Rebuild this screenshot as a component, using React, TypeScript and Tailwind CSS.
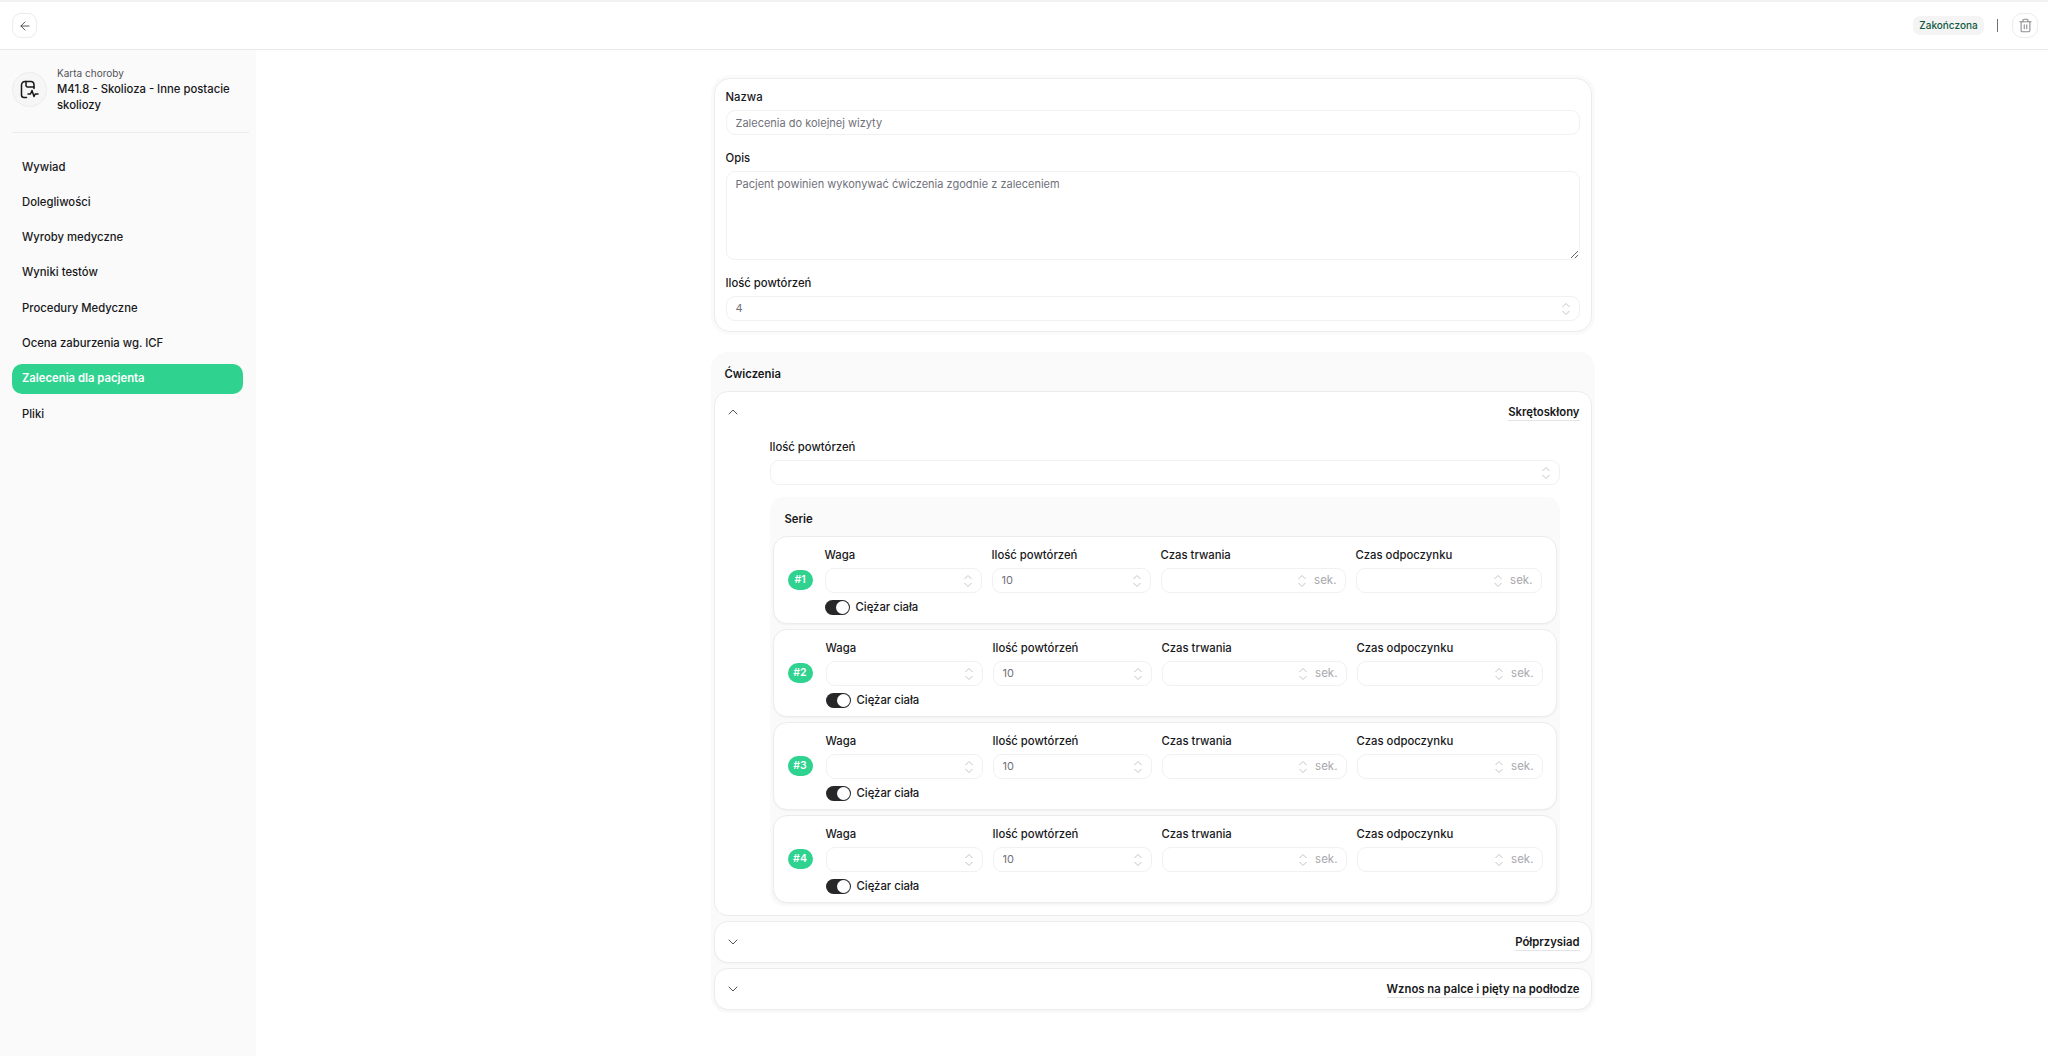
import React from "react";
import { ArrowLeft, ChevronDown, ChevronUp, Trash2 } from "lucide-react";

const navItems = [
  "Wywiad",
  "Dolegliwości",
  "Wyroby medyczne",
  "Wyniki testów",
  "Procedury Medyczne",
  "Ocena zaburzenia wg. ICF",
  "Zalecenia dla pacjenta",
  "Pliki",
];

const Stepper = () => (
  <svg width="10" height="14" viewBox="0 0 10 14" fill="none" stroke="#c4c4c8" strokeWidth="1" className="shrink-0">
    <path d="M1.5 5 L5 1.5 L8.5 5" />
    <path d="M1.5 9 L5 12.5 L8.5 9" />
  </svg>
);

const NumberField = ({ value, suffix }: { value?: string; suffix?: boolean }) => (
  <div className="flex h-[25px] w-full items-center rounded-[9px] border border-[#f1f1f2] bg-white pl-[9px] pr-[8px]">
    <input
      readOnly
      value={value ?? ""}
      className="w-full min-w-0 flex-1 bg-transparent text-[11px] text-[#71717a] outline-none"
    />
    <Stepper />
    {suffix && <span className="ml-[7px] text-[11.5px] text-[#a8a8ae]">sek.</span>}
  </div>
);

const Label = ({ children }: { children: React.ReactNode }) => (
  <label className="block text-[11.3px] font-medium leading-[16px] text-[#18181b]">{children}</label>
);

const SeriesRow = ({ n, first }: { n: number; first?: boolean }) => (
  <div className="flex h-[88px] items-center rounded-[14px] border border-[#ececee] bg-white pl-[14px] pr-[13px] shadow-[0_1px_2px_rgba(0,0,0,0.04)]">
    <div className="flex h-[20px] w-[25px] shrink-0 items-center justify-center rounded-full bg-[#2fd28f] text-[10.5px] font-semibold text-white">
      #{n}
    </div>
    <div className={first ? "ml-[12px] mt-[2px] flex-1" : "ml-[13px] mt-[2px] flex-1"}>
      <div className="grid grid-cols-[157px_159px_185px_186px] gap-x-[10px]">
        <div>
          <Label>Waga</Label>
          <div className="mt-[5px]">
            <NumberField />
          </div>
        </div>
        <div>
          <Label>Ilość powtórzeń</Label>
          <div className="mt-[5px]">
            <NumberField value="10" />
          </div>
        </div>
        <div>
          <Label>Czas trwania</Label>
          <div className="mt-[5px]">
            <NumberField suffix />
          </div>
        </div>
        <div>
          <Label>Czas odpoczynku</Label>
          <div className="mt-[5px]">
            <NumberField suffix />
          </div>
        </div>
      </div>
      <div className="mt-[6px] flex items-center gap-[6px]">
        <div className="flex h-[15px] w-[25px] items-center justify-end rounded-full bg-[#27272a] pr-[1px]">
          <div className="h-[13px] w-[13px] rounded-full bg-white" />
        </div>
        <span className="text-[11.3px] font-medium leading-[16px] text-[#18181b]">Ciężar ciała</span>
      </div>
    </div>
  </div>
);

const CollapsedItem = ({ title }: { title: string }) => (
  <div className="flex h-[42px] items-center justify-between rounded-[14px] border border-[#ececee] bg-white pl-[10px] pr-[11px] shadow-[0_1px_2px_rgba(0,0,0,0.03)]">
    <ChevronDown size={16} strokeWidth={1.5} color="#52525b" />
    <span className="border-b border-[#e4e4e7] text-[11.3px] font-semibold leading-[16px] text-[#18181b]">{title}</span>
  </div>
);

export default function App() {
  return (
    <div className="flex h-[1056px] flex-col overflow-hidden bg-white font-['Inter',sans-serif]">
      <header className="flex h-[50px] shrink-0 items-center justify-between border-t-2 border-b border-t-[#f1f1f2] border-b-[#e9e9eb] pl-[12px] pr-[10px]">
        <button className="flex h-[25px] w-[25px] items-center justify-center rounded-[9px] border border-[#ececee] bg-white">
          <ArrowLeft size={14} strokeWidth={1.5} color="#3f3f46" />
        </button>
        <div className="flex items-center">
          <span className="flex h-[19px] w-[71px] items-center justify-center rounded-[7px] bg-[#f4f4f5] text-[10px] font-medium text-[#0f5a3f]">
            Zakończona
          </span>
          <span className="ml-[13px] h-[13px] w-px bg-[#71717a]" />
          <button className="ml-[14px] flex h-[25px] w-[26px] items-center justify-center rounded-[10px] border border-[#ececee] bg-white">
            <Trash2 size={15} strokeWidth={1.8} color="#8e8e93" />
          </button>
        </div>
      </header>

      <div className="flex min-h-0 flex-1">
        <aside className="w-[256px] shrink-0 bg-[#fafafa] pl-[12px] pr-[7px]">
          <div className="mt-[15px] flex gap-[10px]">
            <div className="mt-[7px] flex h-[35px] w-[35px] shrink-0 items-center justify-center rounded-full border border-[#ececee] bg-[#f6f6f6]">
              <svg width="19" height="19" viewBox="0 0 19 19" fill="none" stroke="#18181b" strokeWidth="1.5" strokeLinecap="round" strokeLinejoin="round">
                <path d="M6.5 17.5 H4 A2.5 2.5 0 0 1 1.5 15 V5 A3.5 3.5 0 0 1 5 1.5 H11 A3 3 0 0 1 14 4.5 V8.5" />
                <path d="M6 1.5 V5.5 A1.5 1.5 0 0 0 7.5 7 H14" />
                <path d="M8 14 H10.5 L12 10.5 L14 16.5 L15.2 14 H18" />
              </svg>
            </div>
            <div className="pt-[1px]">
              <div className="text-[10px] leading-[14px] text-[#52525b]">Karta choroby</div>
              <div className="mt-[1px] w-[180px] text-[11.3px] font-medium leading-[16px] text-[#18181b]">
                M41.8 - Skolioza - Inne postacie skoliozy
              </div>
            </div>
          </div>
          <div className="mt-[19px] h-px bg-[#ececee]" />
          <nav className="mr-[6px] mt-[19px] flex flex-col gap-[5.3px]">
            {navItems.map((item) =>
              item === "Zalecenia dla pacjenta" ? (
                <a key={item} className="flex h-[30px] items-center rounded-[10px] bg-[#2fd28f] px-[10px] text-[11.3px] font-semibold text-white">
                  {item}
                </a>
              ) : (
                <a key={item} className="flex h-[30px] items-center px-[10px] text-[11.3px] font-medium text-[#18181b]">
                  {item}
                </a>
              )
            )}
          </nav>
        </aside>

        <main className="flex flex-1 justify-center pt-[28px]">
          <div className="ml-[1px] w-[878px]">
            <section className="rounded-[16px] border border-[#ececee] bg-white px-[11px] pb-[10px] pt-[10px] shadow-[0_0_0_3px_#fafafa]">
              <Label>Nazwa</Label>
              <input
                readOnly
                placeholder="Zalecenia do kolejnej wizyty"
                className="mt-[5px] block h-[25px] w-full rounded-[9px] border border-[#f1f1f2] px-[9px] text-[11px] text-[#71717a] outline-none placeholder:text-[#71717a]"
              />
              <div className="mt-[15px]">
                <Label>Opis</Label>
              </div>
              <textarea
                readOnly
                placeholder="Pacjent powinien wykonywać ćwiczenia zgodnie z zaleceniem"
                className="mt-[5px] block h-[89px] w-full rounded-[9px] border border-[#f1f1f2] px-[9px] py-[4px] text-[11px] leading-[16px] outline-none placeholder:text-[#71717a]"
              />
              <div className="mt-[15px]">
                <Label>Ilość powtórzeń</Label>
              </div>
              <div className="mt-[5px]">
                <NumberField value="4" />
              </div>
            </section>

            <section className="mx-[-3px] mt-[20px] rounded-[16px] bg-[#fafafa] px-[3px] pb-[3px]">
              <h2 className="flex h-[39px] items-center pl-[11px] pt-[5px] text-[11.3px] font-semibold text-[#18181b]">Ćwiczenia</h2>
              <div className="flex flex-col gap-[5px]">
                <div className="h-[525px] rounded-[14px] border border-[#ececee] bg-white">
                  <div className="flex h-[40px] items-center justify-between pl-[10px] pr-[11px]">
                    <ChevronUp size={16} strokeWidth={1.5} color="#52525b" />
                    <span className="border-b border-[#e4e4e7] text-[11.3px] font-semibold leading-[16px] text-[#18181b]">Skrętoskłony</span>
                  </div>
                  <div className="ml-[55px] mr-[31px]">
                    <div className="mt-[7px]">
                      <Label>Ilość powtórzeń</Label>
                    </div>
                    <div className="mt-[5px]">
                      <NumberField />
                    </div>
                    <div className="mt-[12px] rounded-[14px] bg-[#fafafa] px-[3px] pb-[3px]">
                      <h3 className="flex h-[39px] items-center pl-[12px] pt-[5px] text-[11.3px] font-semibold text-[#18181b]">Serie</h3>
                      <div className="flex flex-col gap-[5px]">
                        <SeriesRow n={1} first />
                        <SeriesRow n={2} />
                        <SeriesRow n={3} />
                        <SeriesRow n={4} />
                      </div>
                    </div>
                  </div>
                </div>
                <CollapsedItem title="Półprzysiad" />
                <CollapsedItem title="Wznos na palce i pięty na podłodze" />
              </div>
            </section>
          </div>
        </main>
      </div>
    </div>
  );
}
